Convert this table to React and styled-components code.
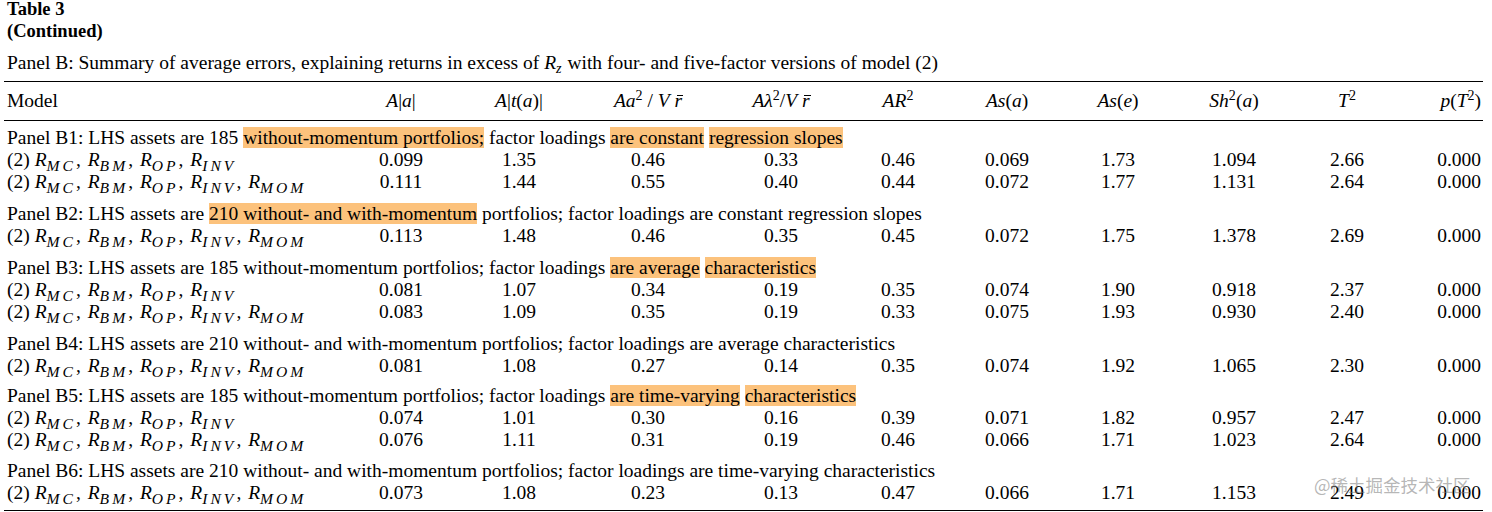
import React from 'react';
import styled, { createGlobalStyle } from 'styled-components';

const Global = createGlobalStyle`
  html, body { margin: 0; padding: 0; background: #fff; }
  body {
    font-family: "Liberation Serif", "Times New Roman", serif;
    color: #000;
  }
`;

const COLS = '338px 118px 118px 140px 126px 108px 110px 112px 120px 106px 83px';

const Page = styled.div`
  position: relative;
  width: 1492px;
  height: 512px;
  overflow: hidden;
  padding-left: 4px;
  box-sizing: border-box;
`;

const Heading = styled.div`
  padding-left: 3px;
  font-weight: bold;
  font-size: 18.5px;
`;

const HeadLine = styled.div`
  line-height: ${(p) => p.$lh}px;
`;

const Caption = styled.div`
  padding-left: 3px;
  margin: 10px 0 7px;
  font-size: 19.5px;
  line-height: 22px;
  white-space: nowrap;
`;

const Table = styled.div`
  width: 1479px;
  font-size: 19.5px;
  line-height: 22px;
  border-top: 1px solid #000;
  border-bottom: 1px solid #000;
  padding-bottom: 6px;
`;

const HeaderRow = styled.div`
  display: grid;
  grid-template-columns: ${COLS};
  padding: 8px 0;
  border-bottom: 1px solid #000;
`;

const Group = styled.div`
  display: grid;
  grid-template-columns: ${COLS};
  padding-top: ${(p) => p.$gap}px;
`;

const Cell = styled.div`
  white-space: nowrap;
  text-align: ${(p) => p.$align || 'center'};
  padding-left: ${(p) => (p.$align === 'left' ? 3 : 0)}px;
  padding-right: ${(p) => (p.$align === 'right' ? 2 : 0)}px;
`;

const TitleCell = styled.div`
  grid-column: 1 / -1;
  padding-left: 3px;
  white-space: nowrap;
`;

const Mark = styled.span`
  background: #fcc27c;
`;

const M = styled.i`
  font-style: italic;
`;

const Sub = styled.span`
  font-style: italic;
  font-size: ${(p) => (p.$small ? 0.72 : 0.8)}em;
  letter-spacing: ${(p) => (p.$small ? 1 : 3)}px;
  line-height: 0;
  vertical-align: baseline;
  position: relative;
  top: 0.3em;
`;

const Sep = styled.span`
  margin-right: 2px;
`;

const Sup = styled.span`
  font-size: 0.72em;
  line-height: 0;
  vertical-align: baseline;
  position: relative;
  top: -0.48em;
`;

const Bar = styled.span`
  position: relative;
  font-style: italic;
  &::after {
    content: '';
    position: absolute;
    left: 2px;
    right: -1px;
    top: 0.26em;
    border-top: 1px solid #000;
  }
`;

const Watermark = styled.div`
  position: absolute;
  left: 1314px;
  top: 474px;
  font-family: "Noto Sans CJK SC", "Noto Sans", sans-serif;
  font-size: 17.5px;
  line-height: 22px;
  color: rgba(120, 120, 120, 0.55);
  white-space: nowrap;
`;

const R = ({ s }) => (
  <>
    <M>R</M>
    <Sub>{s}</Sub>
  </>
);

const Model = ({ subs }) => (
  <>
    (2){' '}
    {subs.map((s, i) => (
      <React.Fragment key={s}>
        <R s={s} />
        {i < subs.length - 1 ? <Sep>, </Sep> : null}
      </React.Fragment>
    ))}
  </>
);

const F4 = ['MC', 'BM', 'OP', 'INV'];
const F5 = ['MC', 'BM', 'OP', 'INV', 'MOM'];

const headers = [
  <>Model</>,
  <><M>A</M>|<M>a</M>|</>,
  <><M>A</M>|<M>t</M>(<M>a</M>)|</>,
  <><M>Aa</M><Sup>2</Sup> / <M>V</M> <Bar>r</Bar></>,
  <><M>Aλ</M><Sup>2</Sup>/<M>V</M> <Bar>r</Bar></>,
  <><M>AR</M><Sup>2</Sup></>,
  <><M>As</M>(<M>a</M>)</>,
  <><M>As</M>(<M>e</M>)</>,
  <><M>Sh</M><Sup>2</Sup>(<M>a</M>)</>,
  <><M>T</M><Sup>2</Sup></>,
  <><M>p</M>(<M>T</M><Sup>2</Sup>)</>,
];

const panels = [
  {
    gap: 6,
    title: [
      'Panel B1: LHS assets are 185 ',
      ['without-momentum portfolios;'],
      ' factor loadings ',
      ['are constant'],
      ' ',
      ['regression slopes'],
    ],
    rows: [
      [F4, '0.099 1.35 0.46 0.33 0.46 0.069 1.73 1.094 2.66 0.000'],
      [F5, '0.111 1.44 0.55 0.40 0.44 0.072 1.77 1.131 2.64 0.000'],
    ],
  },
  {
    gap: 10,
    title: [
      'Panel B2: LHS assets are ',
      ['210 without- and with-momentum'],
      ' portfolios; factor loadings are constant regression slopes',
    ],
    rows: [[F5, '0.113 1.48 0.46 0.35 0.45 0.072 1.75 1.378 2.69 0.000']],
  },
  {
    gap: 10,
    title: [
      'Panel B3: LHS assets are 185 without-momentum portfolios; factor loadings ',
      ['are average'],
      ' ',
      ['characteristics'],
    ],
    rows: [
      [F4, '0.081 1.07 0.34 0.19 0.35 0.074 1.90 0.918 2.37 0.000'],
      [F5, '0.083 1.09 0.35 0.19 0.33 0.075 1.93 0.930 2.40 0.000'],
    ],
  },
  {
    gap: 10,
    title: [
      'Panel B4: LHS assets are 210 without- and with-momentum portfolios; factor loadings are average characteristics',
    ],
    rows: [[F5, '0.081 1.08 0.27 0.14 0.35 0.074 1.92 1.065 2.30 0.000']],
  },
  {
    gap: 8,
    title: [
      'Panel B5: LHS assets are 185 without-momentum portfolios; factor loadings ',
      ['are time-varying'],
      ' ',
      ['characteristics'],
    ],
    rows: [
      [F4, '0.074 1.01 0.30 0.16 0.39 0.071 1.82 0.957 2.47 0.000'],
      [F5, '0.076 1.11 0.31 0.19 0.46 0.066 1.71 1.023 2.64 0.000'],
    ],
  },
  {
    gap: 9,
    title: [
      'Panel B6: LHS assets are 210 without- and with-momentum portfolios; factor loadings are time-varying characteristics',
    ],
    rows: [[F5, '0.073 1.08 0.23 0.13 0.47 0.066 1.71 1.153 2.49 0.000']],
  },
];

const alignFor = (i) => (i === 0 ? 'left' : i === 10 ? 'right' : 'center');

export default function App() {
  return (
    <Page>
      <Global />
      <Heading>
        <HeadLine $lh={19.5}>Table 3</HeadLine>
        <HeadLine $lh={22.5}>(Continued)</HeadLine>
      </Heading>
      <Caption>
        Panel B: Summary of average errors, explaining returns in excess of <M>R</M>
        <Sub $small>z</Sub> with four- and five-factor versions of model (2)
      </Caption>
      <Table>
        <HeaderRow>
          {headers.map((h, i) => (
            <Cell key={i} $align={alignFor(i)}>
              {h}
            </Cell>
          ))}
        </HeaderRow>
        {panels.map((p, gi) => (
          <Group key={gi} $gap={p.gap}>
            <TitleCell>
              {p.title.map((seg, si) =>
                Array.isArray(seg) ? <Mark key={si}>{seg[0]}</Mark> : <React.Fragment key={si}>{seg}</React.Fragment>
              )}
            </TitleCell>
            {p.rows.map(([subs, vals], ri) => (
              <React.Fragment key={ri}>
                <Cell $align="left">
                  <Model subs={subs} />
                </Cell>
                {vals.split(' ').map((v, vi) => (
                  <Cell key={vi} $align={alignFor(vi + 1)}>
                    {v}
                  </Cell>
                ))}
              </React.Fragment>
            ))}
          </Group>
        ))}
      </Table>
      <Watermark>@稀土掘金技术社区</Watermark>
    </Page>
  );
}
